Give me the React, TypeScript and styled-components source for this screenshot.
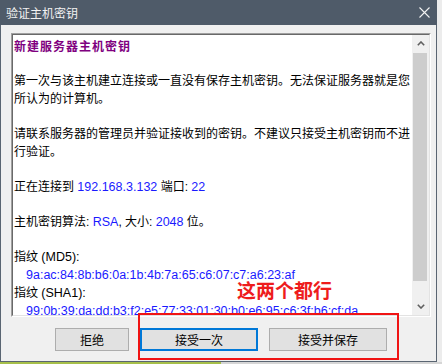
import styled, { createGlobalStyle } from 'styled-components';

const GlobalStyle = createGlobalStyle`
  body {
    margin: 0;
    background: #ececec;
    font-family: "Liberation Sans", "Noto Sans CJK SC", sans-serif;
  }
`;

const ChevronUp = () => (
  <svg width="8" height="5" viewBox="0 0 8 5">
    <polyline points="0.8,4.2 4,1 7.2,4.2" fill="none" stroke="#606060" strokeWidth="1.6" />
  </svg>
);

const ChevronDown = () => (
  <svg width="8" height="5" viewBox="0 0 8 5">
    <polyline points="0.8,0.8 4,4 7.2,0.8" fill="none" stroke="#606060" strokeWidth="1.6" />
  </svg>
);

export default function App() {
  return (
    <Desktop>
      <GlobalStyle />
      <Window>
        <TitleBar>
          <Caption>验证主机密钥</Caption>
          <svg width="11" height="11" viewBox="0 0 11 11">
            <path d="M0.5 0.5 L10.5 10.5 M10.5 0.5 L0.5 10.5" stroke="#f2f2f2" strokeWidth="1.1" />
          </svg>
        </TitleBar>

        <Body>
          <SunkenOuter>
            <SunkenInner>
              <TextArea>
                <Heading>新建服务器主机密钥</Heading>
                <Para>
                  第一次与该主机建立连接或一直没有保存主机密钥。无法保证服务器就是您
                  <br />
                  所认为的计算机。
                </Para>
                <Para>
                  请联系服务器的管理员并验证接收到的密钥。不建议只接受主机密钥而不进
                  <br />
                  行验证。
                </Para>
                <Para>
                  正在连接到 <Val>192.168.3.132</Val> 端口: <Val>22</Val>
                </Para>
                <Para>
                  主机密钥算法: <Val>RSA</Val>, 大小: <Val>2048</Val> 位。
                </Para>
                <Para>
                  指纹 <Latin>(MD5):</Latin>
                  <Finger>9a:ac:84:8b:b6:0a:1b:4b:7a:65:c6:07:c7:a6:23:af</Finger>
                  指纹 <Latin>(SHA1):</Latin>
                  <Finger>99:0b:39:da:dd:b3:f2:e5:77:33:01:30:b0:e6:95:c6:3f:b6:cf:da</Finger>
                </Para>
              </TextArea>
              <ScrollBar>
                <ArrowBox>
                  <ChevronUp />
                </ArrowBox>
                <Track>
                  <Thumb />
                </Track>
                <ArrowBox>
                  <ChevronDown />
                </ArrowBox>
              </ScrollBar>
            </SunkenInner>
          </SunkenOuter>

          <ButtonRow>
            <Button $w={74}>拒绝</Button>
            <Button $w={118} $default>接受一次</Button>
            <Button $w={118}>接受并保存</Button>
          </ButtonRow>
        </Body>

        <NoteText>这两个都行</NoteText>
        <NoteBox />
      </Window>
      <Ground>
        <GreenPart />
      </Ground>
    </Desktop>
  );
}

const Desktop = styled.div`
  width: 442px;
  height: 364px;
  display: flex;
  flex-direction: column;
  overflow: hidden;
`;

const Window = styled.div`
  position: relative;
  box-sizing: border-box;
  width: 437px;
  height: 362px;
  border: 1px solid #5a6572;
  border-top: none;
  background: #f0f0f0;
  display: flex;
  flex-direction: column;
`;

const TitleBar = styled.div`
  height: 25px;
  margin: 0 -1px;
  background: #4f5b69;
  display: flex;
  align-items: center;
  justify-content: space-between;
  padding: 0 7px 0 6px;
`;

const Caption = styled.span`
  color: #f2f2f2;
  font-size: 12px;
  font-family: "Noto Sans CJK SC", sans-serif;
`;

const Body = styled.div`
  flex: 1;
  padding: 8px 0 0 10px;
  display: flex;
  flex-direction: column;
`;

const SunkenOuter = styled.div`
  box-sizing: border-box;
  width: 420px;
  height: 284px;
  border: 1px solid;
  border-color: #a0a0a0 #ffffff #ffffff #a0a0a0;
`;

const SunkenInner = styled.div`
  height: 100%;
  box-sizing: border-box;
  border: 1px solid;
  border-color: #696969 #e3e3e3 #e3e3e3 #696969;
  display: flex;
`;

const TextArea = styled.div`
  flex: 1;
  background: #fff;
  overflow: hidden;
  padding: 2px 0 0 1px;
  font-size: 12px;
  line-height: 18px;
  color: #000;
  white-space: nowrap;
`;

const Heading = styled.div`
  color: #800080;
  font-weight: bold;
  letter-spacing: 1px;
  font-family: "Noto Sans CJK SC", sans-serif;
`;

const Para = styled.div`
  margin-top: 17px;
`;

const Latin = styled.span`
  font-size: 12.5px;
`;

const Val = styled.span`
  color: #1a1aff;
  font-size: 12.5px;
`;

const Finger = styled.div`
  color: #1a1aff;
  font-size: 12.5px;
  padding-left: 12px;
`;

const ScrollBar = styled.div`
  width: 17px;
  background: #f0f0f0;
  display: flex;
  flex-direction: column;
`;

const ArrowBox = styled.div`
  height: 17px;
  display: flex;
  align-items: center;
  justify-content: center;
`;

const Track = styled.div`
  flex: 1;
  padding: 1px 2px 0 1px;
`;

const Thumb = styled.div`
  height: 228px;
  background: #cdcdcd;
`;

const ButtonRow = styled.div`
  margin-top: 11px;
  padding-left: 44px;
  display: flex;
  gap: 11px;
`;

const Button = styled.button<{ $w: number; $default?: boolean }>`
  box-sizing: border-box;
  width: ${(p) => p.$w}px;
  height: 23px;
  padding: 0;
  background: #e1e1e1;
  border: ${(p) => (p.$default ? '2px solid #0078d7' : '1px solid #adadad')};
  font-family: "Noto Sans CJK SC", sans-serif;
  font-size: 12px;
  color: #000;
`;

const NoteText = styled.div`
  position: absolute;
  left: 236px;
  top: 279px;
  color: #ee1c1c;
  font-family: "Noto Sans CJK SC", sans-serif;
  font-weight: bold;
  font-size: 19px;
  line-height: 22px;
`;

const NoteBox = styled.div`
  position: absolute;
  left: 137px;
  top: 313px;
  width: 261px;
  height: 47px;
  box-sizing: border-box;
  border: 2px solid #f01414;
`;

const Ground = styled.div`
  height: 2px;
  background: #d6d6d6;
  display: flex;
`;

const GreenPart = styled.div`
  width: 221px;
  background: #a6bf4a;
`;
